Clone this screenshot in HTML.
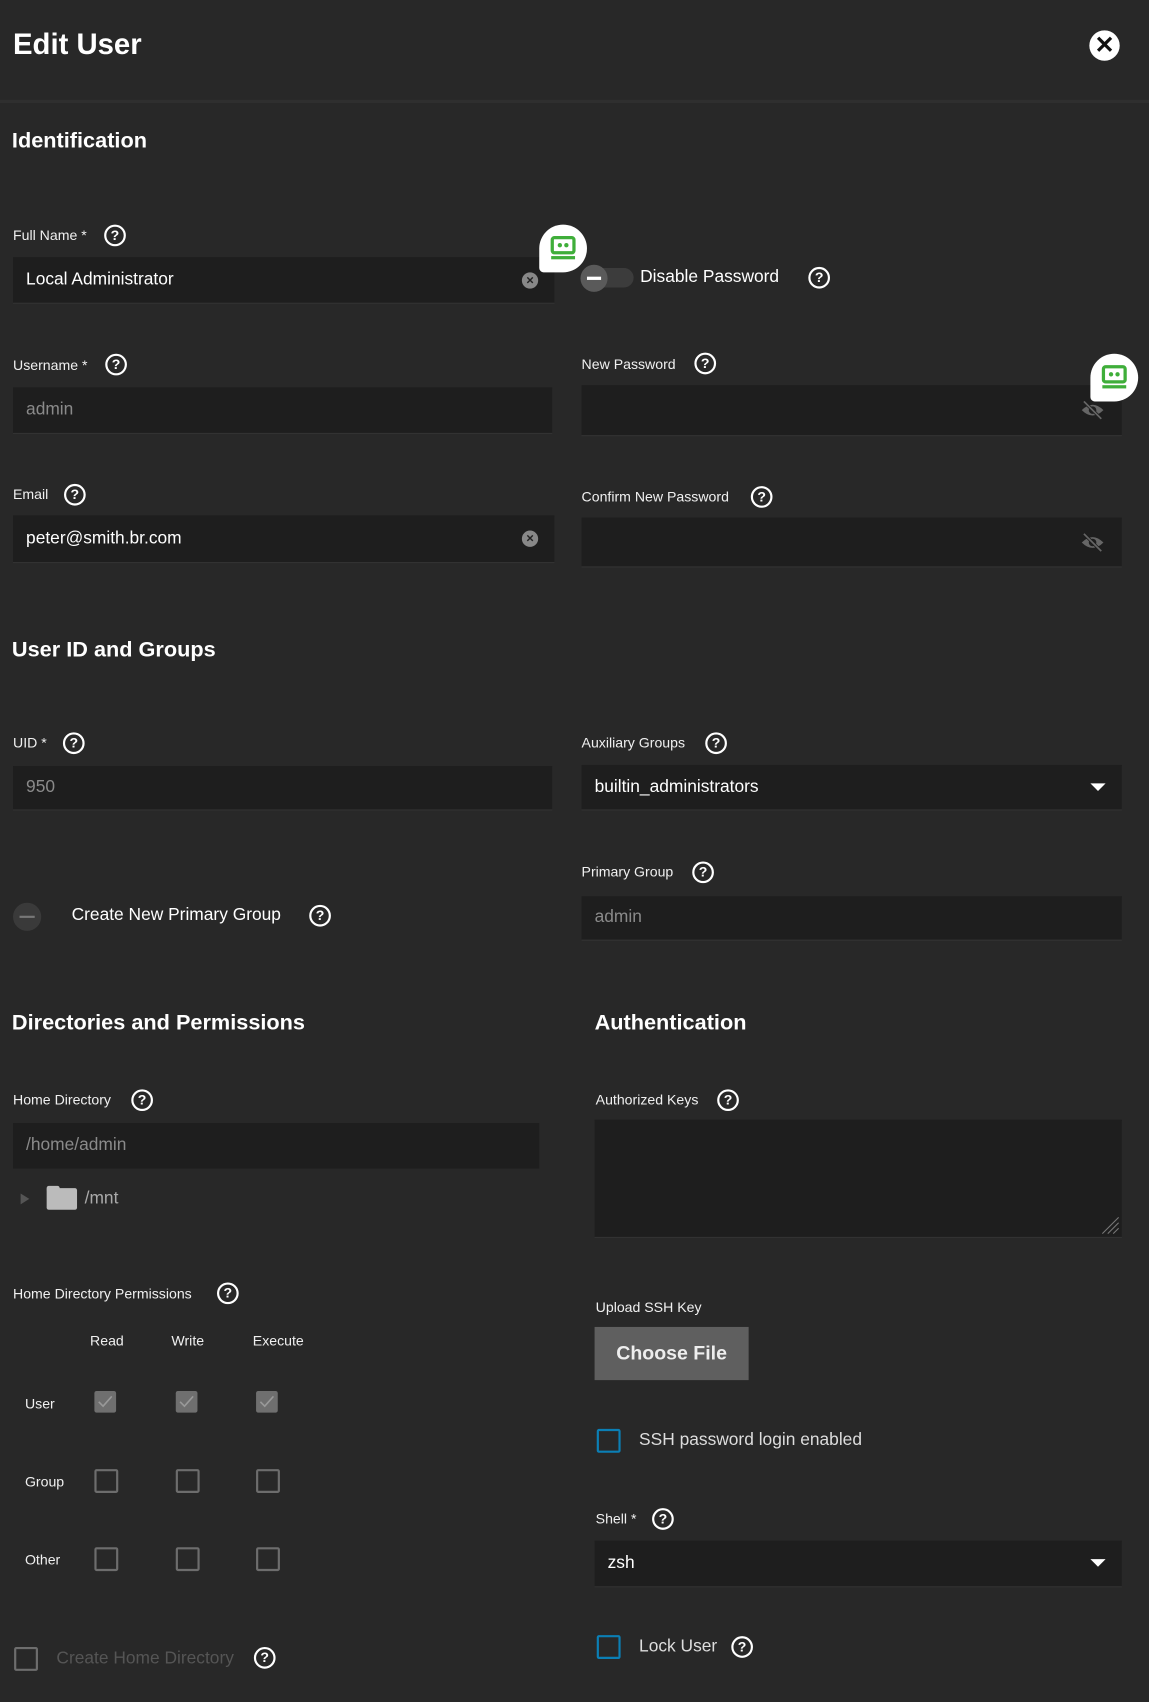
<!DOCTYPE html>
<html><head><meta charset="utf-8"><style>
html,body{margin:0;padding:0;background:#282828;overflow:hidden;width:1149px;height:1702px}
#w{position:absolute;left:0;top:0;width:1059px;height:1569px;transform:scale(1.08499);transform-origin:0 0;font-family:"Liberation Sans",sans-serif;color:#fff}
#w div,#w span{position:absolute;white-space:nowrap}
.lb{font-size:13px;color:#f0f0f0}
.h{width:16px;height:16px;border:2px solid #fff;border-radius:50%;font-size:13px;font-weight:bold;text-align:center;line-height:16px;color:#fff}
.in{background:#1e1e1e;box-shadow:0 1px 0 #333}
.tx{font-size:16px;line-height:20px}
.sec{font-size:20px;font-weight:bold}
.cb{width:18px;height:18px;border:2px solid #6d6d6d;border-radius:2px}
.cbf{width:20px;height:20px;background:#6f6f6f;border-radius:2px}
.clr{width:15px;height:15px;border-radius:50%;background:#888;color:#222;font-size:12px;line-height:15px;text-align:center;font-weight:bold}
.bub{width:44px;height:44px;background:#fff;border-radius:22px 22px 22px 4px}
</style></head><body><div id="w">
<div style="left:12px;top:26px;font-size:27px;font-weight:bold">Edit User</div>
<div style="left:1004px;top:28px;width:28px;height:28px;border-radius:50%;background:#fff;color:#111;font-size:22px;font-weight:bold;text-align:center;line-height:28px">✕</div>
<div style="left:0;top:92px;width:1059px;height:3px;background:#2f2f2f"></div>

<div class="sec" style="left:11px;top:119px">Identification</div>

<div class="lb" style="left:12px;top:209px">Full Name *</div><div class="h" style="left:96px;top:207px">?</div>
<div class="in" style="left:12px;top:237px;width:499px;height:42px"></div>
<div class="tx" style="left:24px;top:248px">Local Administrator</div>
<div class="clr" style="left:481px;top:251px">×</div>

<div class="bub" style="left:497px;top:207px"><svg width="44" height="44" viewBox="0 0 44 44" style="position:absolute;left:0;top:0"><rect x="12" y="12" width="20" height="14" rx="2" fill="none" stroke="#3fae3a" stroke-width="3"/><circle cx="19" cy="19" r="2" fill="#3fae3a"/><circle cx="25" cy="19" r="2" fill="#3fae3a"/><rect x="11" y="29" width="22" height="3" fill="#3fae3a"/></svg></div>

<div style="left:540px;top:247px;width:44px;height:18px;border-radius:9px;background:#3c3c3c"></div>
<div style="left:535px;top:244px;width:25px;height:25px;border-radius:50%;background:#5a5a5a"><div style="left:6px;top:11px;width:13px;height:3px;background:#fff"></div></div>
<div class="tx" style="left:590px;top:246px">Disable Password</div><div class="h" style="left:745px;top:246px">?</div>

<div class="lb" style="left:12px;top:329px">Username *</div><div class="h" style="left:97px;top:326px">?</div>
<div class="in" style="left:12px;top:357px;width:497px;height:42px"></div>
<div class="tx" style="left:24px;top:368px;color:#8a8a8a">admin</div>

<div class="lb" style="left:536px;top:328px">New Password</div><div class="h" style="left:640px;top:325px">?</div>
<div class="in" style="left:536px;top:355px;width:498px;height:46px"></div>
<svg style="position:absolute;left:995px;top:368px" width="24" height="20" viewBox="0 0 24 20"><path d="M2 10 Q12 0 22 10 Q12 20 2 10Z" fill="#666"/><circle cx="12" cy="10" r="3.5" fill="#1e1e1e"/><path d="M4 2 L20 18" stroke="#1e1e1e" stroke-width="3"/><path d="M4 2 L20 18" stroke="#666" stroke-width="1.6"/></svg>
<div class="bub" style="left:1005px;top:326px"><svg width="44" height="44" viewBox="0 0 44 44" style="position:absolute;left:0;top:0"><rect x="12" y="12" width="20" height="14" rx="2" fill="none" stroke="#3fae3a" stroke-width="3"/><circle cx="19" cy="19" r="2" fill="#3fae3a"/><circle cx="25" cy="19" r="2" fill="#3fae3a"/><rect x="11" y="29" width="22" height="3" fill="#3fae3a"/></svg></div>

<div class="lb" style="left:12px;top:448px">Email</div><div class="h" style="left:59px;top:446px">?</div>
<div class="in" style="left:12px;top:475px;width:499px;height:43px"></div>
<div class="tx" style="left:24px;top:487px">peter@smith.br.com</div>
<div class="clr" style="left:481px;top:489px">×</div>

<div class="lb" style="left:536px;top:450px">Confirm New Password</div><div class="h" style="left:692px;top:448px">?</div>
<div class="in" style="left:536px;top:477px;width:498px;height:45px"></div>
<svg style="position:absolute;left:995px;top:490px" width="24" height="20" viewBox="0 0 24 20"><path d="M2 10 Q12 0 22 10 Q12 20 2 10Z" fill="#666"/><circle cx="12" cy="10" r="3.5" fill="#1e1e1e"/><path d="M4 2 L20 18" stroke="#1e1e1e" stroke-width="3"/><path d="M4 2 L20 18" stroke="#666" stroke-width="1.6"/></svg>

<div class="sec" style="left:11px;top:588px">User ID and Groups</div>

<div class="lb" style="left:12px;top:677px">UID *</div><div class="h" style="left:58px;top:675px">?</div>
<div class="in" style="left:12px;top:706px;width:497px;height:40px"></div>
<div class="tx" style="left:24px;top:716px;color:#8a8a8a">950</div>

<div class="lb" style="left:536px;top:677px">Auxiliary Groups</div><div class="h" style="left:650px;top:675px">?</div>
<div class="in" style="left:536px;top:705px;width:498px;height:41px"></div>
<div class="tx" style="left:548px;top:716px">builtin_administrators</div>
<div style="left:1005px;top:722px;width:0;height:0;border-left:7px solid transparent;border-right:7px solid transparent;border-top:7px solid #fff"></div>

<div class="lb" style="left:536px;top:796px">Primary Group</div><div class="h" style="left:638px;top:794px">?</div>
<div class="in" style="left:536px;top:826px;width:498px;height:40px"></div>
<div class="tx" style="left:548px;top:836px;color:#8a8a8a">admin</div>

<div style="left:12px;top:832px;width:26px;height:26px;border-radius:50%;background:#3a3a3a"><div style="left:6px;top:12px;width:14px;height:2px;background:#777"></div></div>
<div class="tx" style="left:66px;top:834px">Create New Primary Group</div><div class="h" style="left:285px;top:834px">?</div>

<div class="sec" style="left:11px;top:932px">Directories and Permissions</div>
<div class="sec" style="left:548px;top:932px">Authentication</div>

<div class="lb" style="left:12px;top:1006px">Home Directory</div><div class="h" style="left:121px;top:1004px">?</div>
<div class="in" style="left:12px;top:1035px;width:485px;height:42px;box-shadow:none"></div>
<div class="tx" style="left:24px;top:1046px;color:#8a8a8a">/home/admin</div>
<div style="left:19px;top:1100px;width:0;height:0;border-top:5px solid transparent;border-bottom:5px solid transparent;border-left:8px solid #555"></div>
<div style="left:43px;top:1095px;width:28px;height:20px;background:#bbb;border-radius:2px"></div>
<div style="left:43px;top:1093px;width:12px;height:4px;background:#bbb;border-radius:2px 2px 0 0"></div>
<div class="tx" style="left:78px;top:1095px;color:#aaa">/mnt</div>

<div class="lb" style="left:549px;top:1006px">Authorized Keys</div><div class="h" style="left:661px;top:1004px">?</div>
<div class="in" style="left:548px;top:1032px;width:486px;height:108px"></div>
<svg style="position:absolute;left:1014px;top:1120px" width="18" height="18"><path d="M2 17L17 2M7 17L17 7M12 17L17 12" stroke="#777" stroke-width="1"/></svg>

<div class="lb" style="left:12px;top:1185px">Home Directory Permissions</div><div class="h" style="left:200px;top:1182px">?</div>
<div class="lb" style="left:83px;top:1228px">Read</div><div class="lb" style="left:158px;top:1228px">Write</div><div class="lb" style="left:233px;top:1228px">Execute</div>
<div class="lb" style="left:23px;top:1286px">User</div><div class="lb" style="left:23px;top:1358px">Group</div><div class="lb" style="left:23px;top:1430px">Other</div>
<div class="cbf" style="left:87px;top:1282px"><svg width="20" height="20"><path d="M4 10L8 14L16 5" fill="none" stroke="#999" stroke-width="1.5"/></svg></div>
<div class="cbf" style="left:162px;top:1282px"><svg width="20" height="20"><path d="M4 10L8 14L16 5" fill="none" stroke="#999" stroke-width="1.5"/></svg></div>
<div class="cbf" style="left:236px;top:1282px"><svg width="20" height="20"><path d="M4 10L8 14L16 5" fill="none" stroke="#999" stroke-width="1.5"/></svg></div>
<div class="cb" style="left:87px;top:1354px"></div><div class="cb" style="left:162px;top:1354px"></div><div class="cb" style="left:236px;top:1354px"></div>
<div class="cb" style="left:87px;top:1426px"></div><div class="cb" style="left:162px;top:1426px"></div><div class="cb" style="left:236px;top:1426px"></div>

<div class="lb" style="left:549px;top:1197px">Upload SSH Key</div>
<div style="left:548px;top:1223px;width:142px;height:49px;background:#5f5f5f;font-size:18px;font-weight:bold;text-align:center;line-height:49px;color:#eee">Choose File</div>

<div class="cb" style="left:550px;top:1317px;border-color:#0b7fb5"></div>
<div class="tx" style="left:589px;top:1318px;color:#ddd">SSH password login enabled</div>

<div class="lb" style="left:549px;top:1392px">Shell *</div><div class="h" style="left:601px;top:1390px">?</div>
<div class="in" style="left:548px;top:1420px;width:486px;height:42px"></div>
<div class="tx" style="left:560px;top:1431px">zsh</div>
<div style="left:1005px;top:1437px;width:0;height:0;border-left:7px solid transparent;border-right:7px solid transparent;border-top:7px solid #fff"></div>

<div class="cb" style="left:550px;top:1507px;border-color:#0b7fb5"></div>
<div class="tx" style="left:589px;top:1508px;color:#ddd">Lock User</div><div class="h" style="left:674px;top:1508px">?</div>

<div class="cb" style="left:13px;top:1518px"></div>
<div class="tx" style="left:52px;top:1519px;color:#555">Create Home Directory</div><div class="h" style="left:234px;top:1518px">?</div>
</div></body></html>
